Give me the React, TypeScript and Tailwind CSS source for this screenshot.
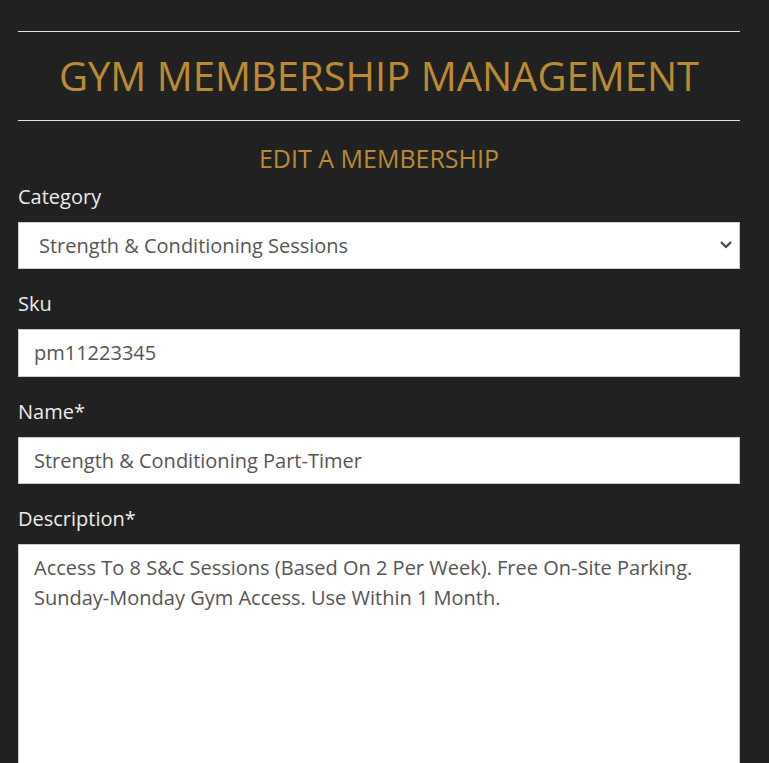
import React from "react";

export default function App() {
  const font = { fontFamily: '"Open Sans", "Noto Sans", sans-serif' };
  return (
    <div className="min-h-[763px] bg-[#212121] pl-[18px] pr-[29px] pt-[31px]" style={font}>
      <div className="border-y border-[#e0e0e0] h-[90px] flex items-center justify-center">
        <h1 className="text-[40px] leading-none text-[#bb8a33] font-normal">
          GYM MEMBERSHIP MANAGEMENT
        </h1>
      </div>
      <h2 className="text-center text-[25px] leading-none text-[#bb8a33] mt-[25px]">
        EDIT A MEMBERSHIP
      </h2>
      <form className="mt-[11px]">
        <label className="block text-[20px] leading-[30px] text-[#ececec]">Category</label>
        <div className="relative mt-[10px] h-[47px] bg-white border border-[#ccc]">
          <div className="flex h-full items-center pl-[20px] text-[20px] text-[#555]">
            Strength &amp; Conditioning Sessions
          </div>
          <svg className="absolute right-[6px] top-[17px]" width="14" height="10" viewBox="0 0 14 10">
            <path d="M2 2 L7 7 L12 2" stroke="#444" strokeWidth="2.2" fill="none" />
          </svg>
        </div>
        <label className="block mt-[20px] text-[20px] leading-[30px] text-[#ececec]">Sku</label>
        <div className="mt-[10px] h-[48px] bg-white border border-[#ccc] flex items-center px-[15px] text-[20px] text-[#555]">
          pm11223345
        </div>
        <label className="block mt-[20px] text-[20px] leading-[30px] text-[#ececec]">Name*</label>
        <div className="mt-[10px] h-[47px] bg-white border border-[#ccc] flex items-center px-[15px] text-[20px] text-[#555]">
          Strength &amp; Conditioning Part-Timer
        </div>
        <label className="block mt-[20px] text-[20px] leading-[30px] text-[#ececec]">Description*</label>
        <div className="mt-[10px] h-[260px] bg-white border border-[#ccc] px-[15px] pt-[8px] text-[20px] leading-[30px] text-[#555]">
          Access To 8 S&amp;C Sessions (Based On 2 Per Week). Free On-Site Parking. Sunday-Monday Gym Access. Use Within 1 Month.
        </div>
      </form>
    </div>
  );
}
